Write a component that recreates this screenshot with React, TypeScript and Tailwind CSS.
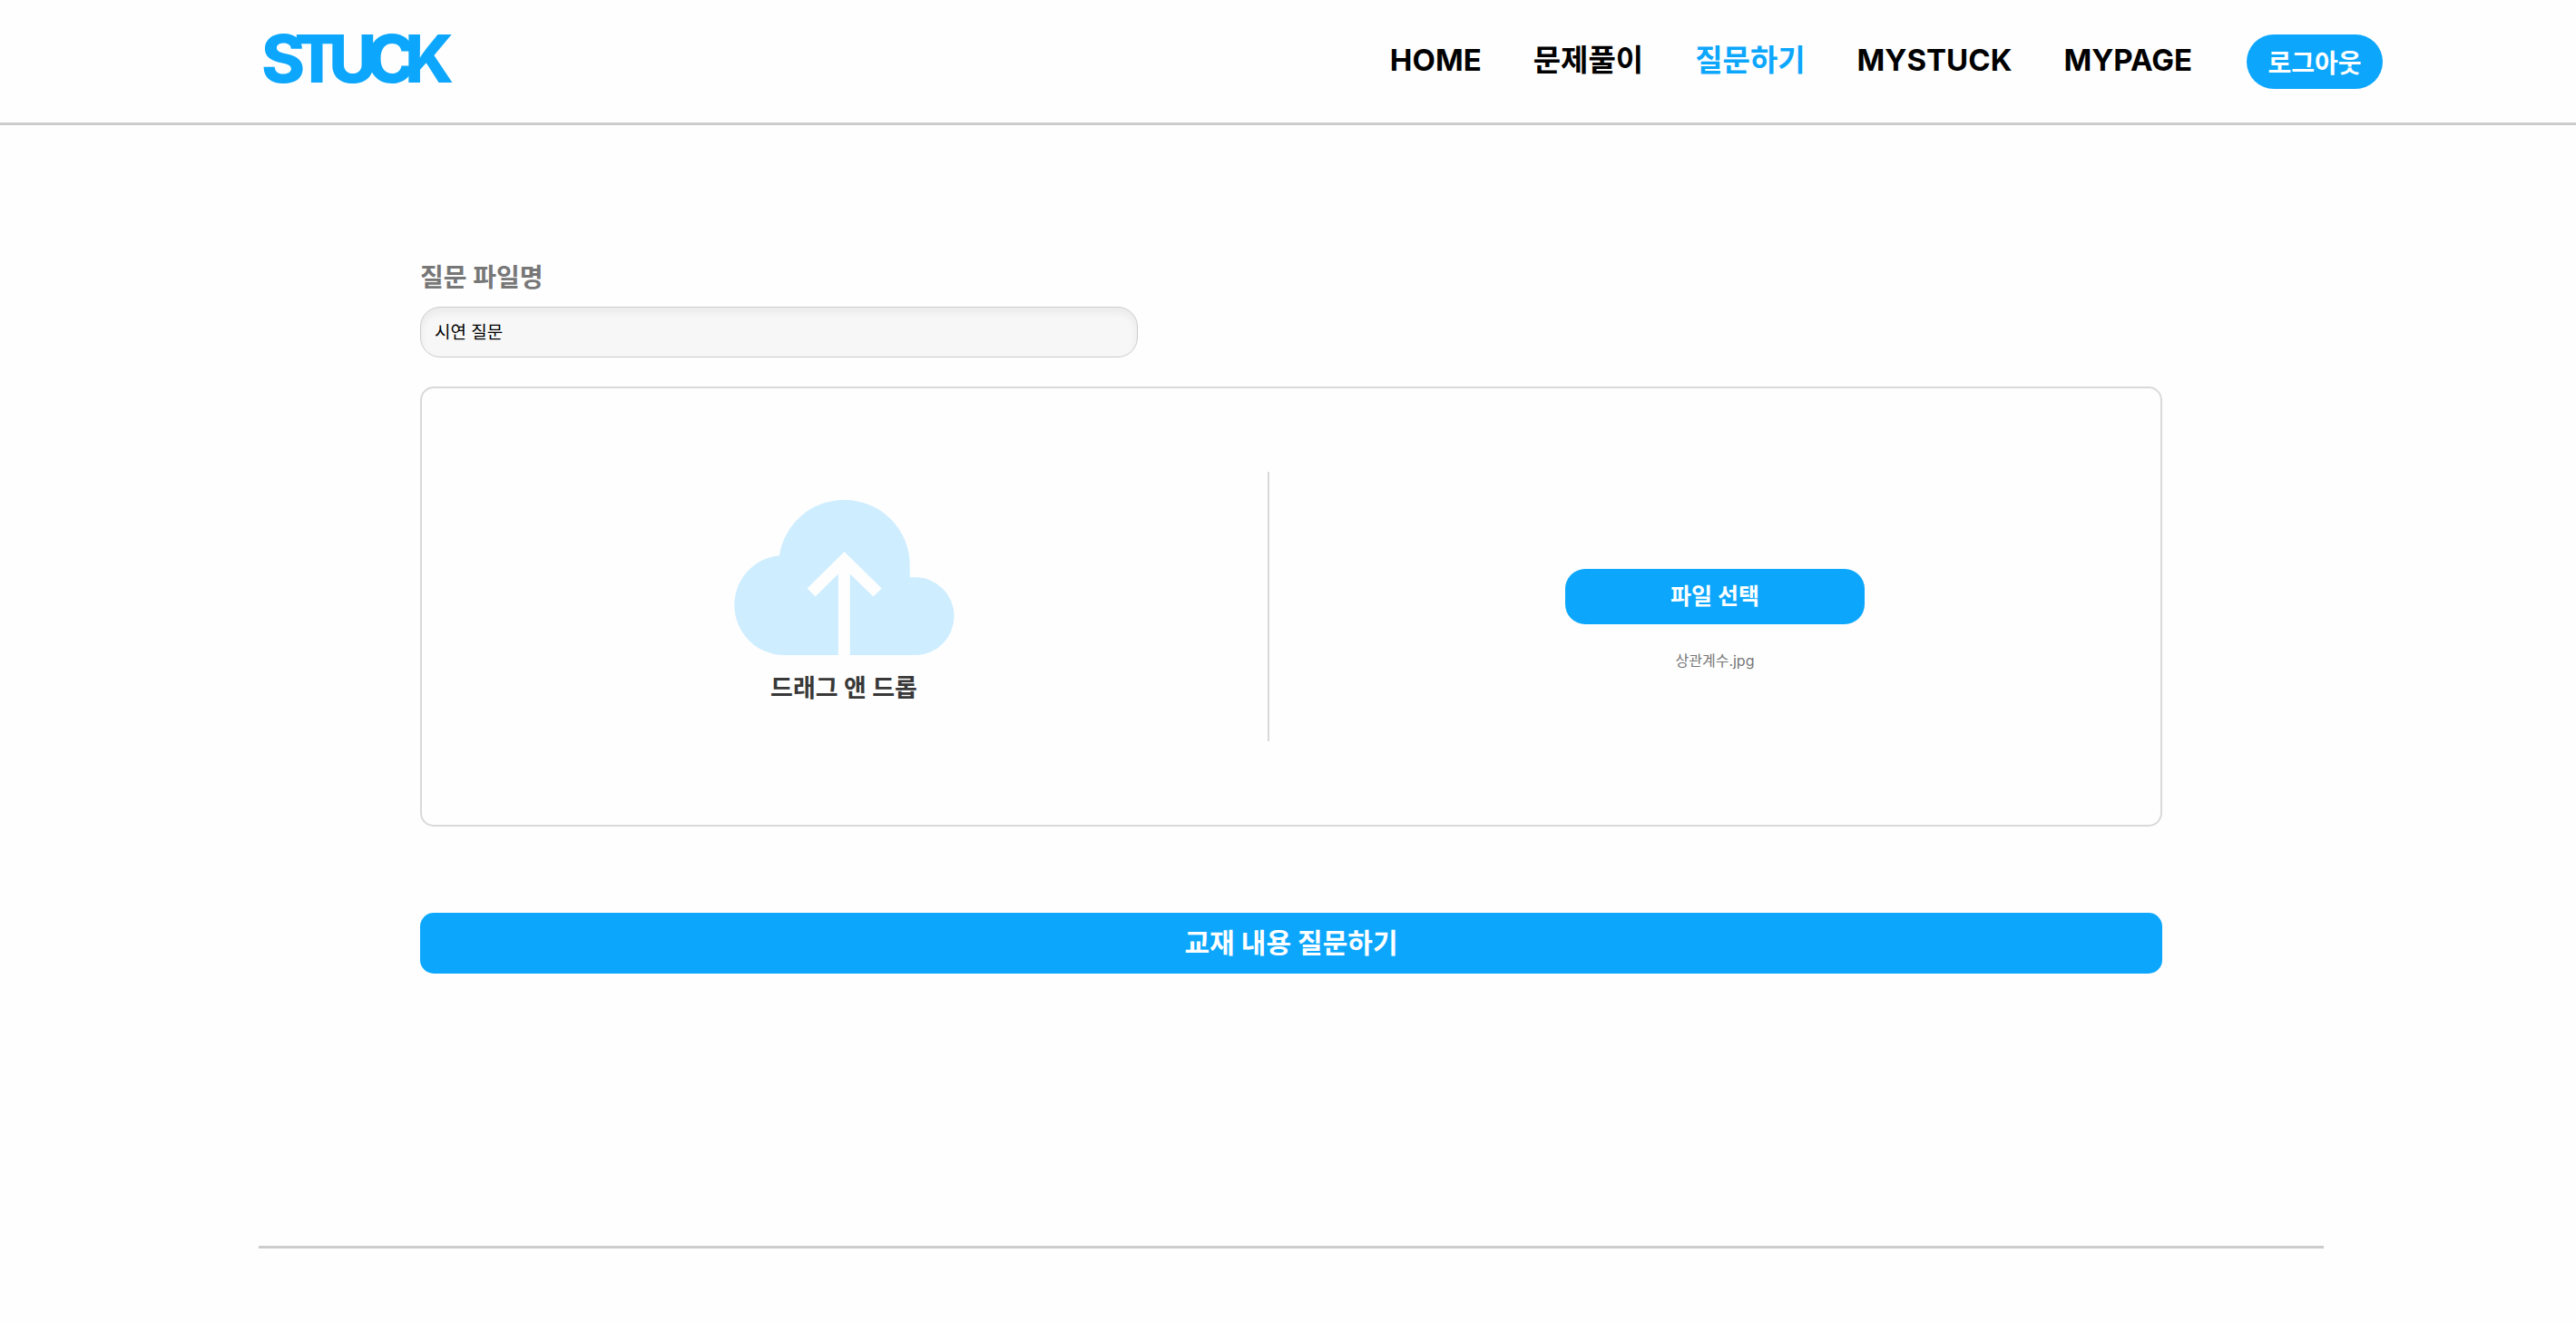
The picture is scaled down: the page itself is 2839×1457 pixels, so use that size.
import { useState } from "react";

const NAV_ITEMS = [
  { label: "HOME", active: false },
  { label: "문제풀이", active: false },
  { label: "질문하기", active: true },
  { label: "MYSTUCK", active: false },
  { label: "MYPAGE", active: false },
];

function Header() {
  return (
    <header className="flex h-[138px] items-center justify-between border-b-3 border-[#cccccc] pr-[213px] pl-[288px]">
      <a
        href="#home"
        className="pb-1.5 text-[73px] leading-none font-[850] tracking-[-0.16em] text-[#0ca7fd]"
      >
        STUCK
      </a>
      <div className="flex items-center gap-[60px]">
        <nav className="flex items-center gap-[57px] pb-1">
          {NAV_ITEMS.map((item) => (
            <a
              key={item.label}
              href={`#${item.label}`}
              aria-current={item.active ? "page" : undefined}
              className={`text-[33px] leading-10 font-bold whitespace-nowrap ${
                item.active ? "text-[#0ca7fd]" : "text-black"
              }`}
            >
              {item.label}
            </a>
          ))}
        </nav>
        <button
          type="button"
          className="h-[60px] w-[150px] rounded-full bg-[#0ca7fd] pt-1 text-[28px] font-bold text-white"
        >
          로그아웃
        </button>
      </div>
    </header>
  );
}

function CloudUploadIcon() {
  return (
    <svg
      viewBox="88 92 728 514"
      className="h-[171px] w-[243px]"
      fill="#ceedff"
      aria-hidden="true"
    >
      <path d="M253 606A165 165 0 0 1 88 441A165 165 0 0 1 237 276A216 216 0 0 1 453 92A216 216 0 0 1 669 308V348H687A129 129 0 0 1 687 606H471V337L548 412L576 385L452 263L329 385L356 412L432 337V606Z" />
    </svg>
  );
}

function UploadPanel() {
  return (
    <section className="mt-8 flex h-[485px] items-center rounded-[15px] border-2 border-[#d9d9d9]">
      <div className="flex w-[932px] flex-col items-center gap-3.5 pr-0.5 pb-1">
        <CloudUploadIcon />
        <p className="text-[27px] leading-[46px] font-bold text-[#383838]">드래그 앤 드롭</p>
      </div>
      <div className="h-[297px] w-0.5 bg-[#d9d9d9]" />
      <div className="flex flex-1 flex-col items-center gap-7 pt-[30px]">
        <button
          type="button"
          className="h-[61px] w-[330px] rounded-[22px] bg-[#0ca7fd] text-[25px] font-bold text-white"
        >
          파일 선택
        </button>
        <p className="text-base leading-6 text-[#777777]">상관계수.jpg</p>
      </div>
    </section>
  );
}

export default function App() {
  const [fileName, setFileName] = useState("시연 질문");

  return (
    <div className="min-h-screen bg-[#fefefe] font-['Inter','Noto_Sans_CJK_KR',sans-serif]">
      <Header />
      <div className="pr-[278px] pl-[285px]">
        <main className="mx-auto max-w-[1920px] pt-[146px]">
          <label
            htmlFor="question-name"
            className="block text-[28px] leading-[44px] font-bold text-[#777777]"
          >
            질문 파일명
          </label>
          <input
            id="question-name"
            type="text"
            value={fileName}
            onChange={(event) => setFileName(event.target.value)}
            className="mt-2.5 block h-14 w-[791px] rounded-[22px] border border-[#cccccc] bg-[#f7f7f7] px-[15px] pb-1 text-[19px] text-black shadow-[inset_0_5px_10px_rgba(0,0,0,0.06)] outline-none"
          />
          <UploadPanel />
          <button
            type="submit"
            className="mt-[95px] block h-[67px] w-full rounded-[15px] bg-[#0ca7fd] text-[30px] font-bold text-white"
          >
            교재 내용 질문하기
          </button>
        </main>
        <footer className="mt-[300px] border-t-3 border-[#cccccc]" />
      </div>
    </div>
  );
}
